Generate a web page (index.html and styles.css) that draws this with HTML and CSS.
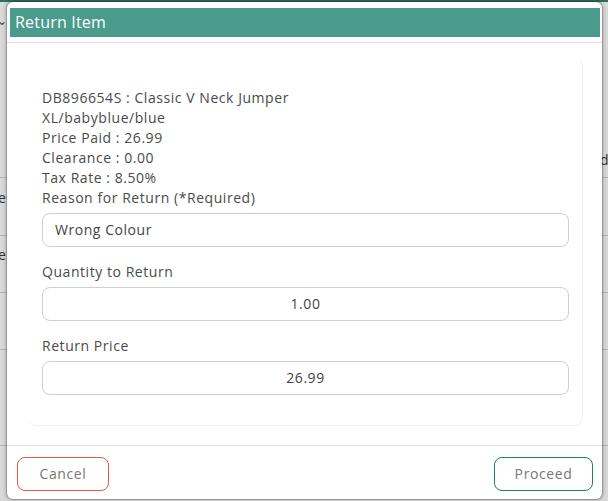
FILE: index.html
```html
<!DOCTYPE html>
<html>
<head>
<meta charset="utf-8">
<link rel="stylesheet" href="styles.css">
</head>
<body>
<div class="page">
  <div class="topbar"></div>
  <div class="row r1"><span class="chev">&#8964;</span></div>
  <div class="row r2"><span class="cell">d</span></div>
  <div class="row r3"><span class="cell">e</span></div>
  <div class="row r4"><span class="cell">e</span></div>
  <div class="row r5"></div>
  <div class="row r6"></div>
</div>

<div class="modal">
  <div class="modal-head">
    <div class="title-bar">Return Item</div>
  </div>
  <div class="modal-body">
    <div class="card">
      <div class="info">
        <div>DB896654S : Classic V Neck Jumper</div>
        <div>XL/babyblue/blue</div>
        <div>Price Paid : 26.99</div>
        <div>Clearance : 0.00</div>
        <div>Tax Rate : 8.50%</div>
      </div>
      <div class="field first">
        <div class="label">Reason for Return (*Required)</div>
        <div class="input">Wrong Colour</div>
      </div>
      <div class="field">
        <div class="label">Quantity to Return</div>
        <div class="input center">1.00</div>
      </div>
      <div class="field">
        <div class="label">Return Price</div>
        <div class="input center">26.99</div>
      </div>
    </div>
  </div>
  <div class="modal-foot">
    <button class="btn cancel">Cancel</button>
    <button class="btn proceed">Proceed</button>
  </div>
</div>
</body>
</html>
```

FILE: styles.css
```css
* { box-sizing: border-box; }
html, body { margin: 0; padding: 0; }
body {
  width: 608px;
  height: 501px;
  overflow: hidden;
  background: #dadada;
  font-family: "Open Sans", "Liberation Sans", sans-serif;
  position: relative;
}
.page {
  display: flex;
  flex-direction: column;
  color: #333;
  font-size: 14px;
}
.topbar { height: 2px; background: #2e6f62; }
.row {
  border-bottom: 1px solid #b5b5b5;
  position: relative;
}
.r1 { height: 176px; }
.r2 { height: 58px; }
.r3 { height: 57px; }
.r4 { height: 57px; }
.r5 { height: 96px; }
.r6 { height: 56px; }
.chev { position: absolute; left: -3px; top: 10px; font-size: 12px; color: #444; }
.cell { position: absolute; top: -28px; left: -2px; }
.r2 .cell { left: 600px; top: -28px; }
.r3 .cell { top: -48px; }
.r4 .cell { top: -48px; }

.modal {
  position: absolute;
  left: 7px;
  top: 2px;
  width: 595px;
  height: 497px;
  background: #fff;
  border-radius: 6px;
  box-shadow: 0 0 0 1px rgba(0,0,0,0.18), 0 0 4px 1px rgba(0,0,0,0.25);
  display: flex;
  flex-direction: column;
}
.modal-head {
  padding: 6px 2px 5px 3px;
  border-bottom: 1px solid #e2e2e2;
}
.title-bar {
  height: 29px;
  background: #4a9b8b;
  color: #fff;
  font-size: 16px;
  font-weight: 400;
  line-height: 28px;
  padding-left: 5px;
  letter-spacing: 0.2px;
}
.modal-body {
  flex: 1;
  padding: 15px 19px 19px 21px;
}
.card {
  border: 1px solid #efefef;
  border-top-color: transparent;
  border-left-color: transparent;
  border-radius: 8px;
  padding: 29px 13px 30px 13px;
  color: #4a4a4a;
  font-size: 14px;
  line-height: 20px;
  letter-spacing: 0.55px;
}
.field { margin-top: 15px; }
.field.first { margin-top: 0; }
.label { margin-bottom: 5px; }
.input {
  height: 34px;
  border: 1px solid #cfcfcf;
  border-radius: 8px;
  padding: 0 12px;
  line-height: 32px;
  color: #444;
}
.input.center { text-align: center; }
.modal-foot {
  border-top: 1px solid #e2e2e2;
  padding: 11px 9px 9px 10px;
  display: flex;
  justify-content: space-between;
}
.btn {
  height: 34px;
  background: #fff;
  border-radius: 8px;
  font-family: inherit;
  font-size: 14px;
  color: #777;
  letter-spacing: 0.6px;
  padding: 0 0 2px;
}
.cancel { width: 92px; border: 1px solid #e05a45; }
.proceed { width: 99px; border: 1px solid #1e7f6c; }
```
